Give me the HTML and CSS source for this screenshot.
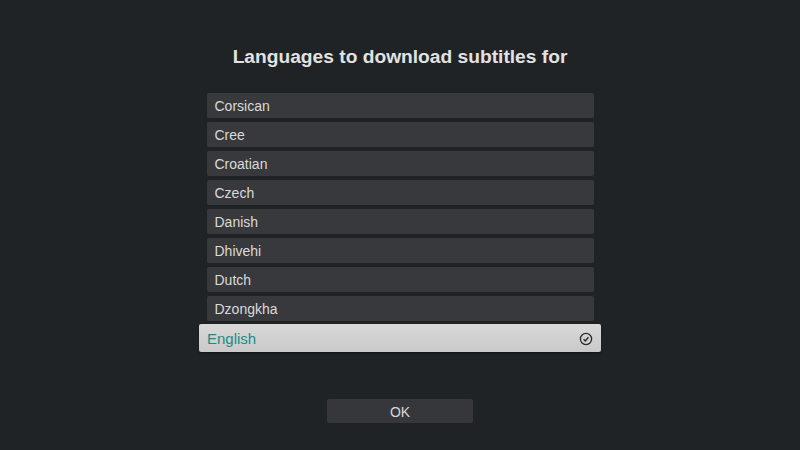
FILE: index.html
```html
<!DOCTYPE html>
<html>
<head>
<meta charset="utf-8">
<link rel="stylesheet" href="styles.css">
</head>
<body>
<div class="dialog">
  <h1 class="title">Languages to download subtitles for</h1>
  <ul class="list">
    <li class="item">Corsican</li>
    <li class="item">Cree</li>
    <li class="item">Croatian</li>
    <li class="item">Czech</li>
    <li class="item">Danish</li>
    <li class="item">Dhivehi</li>
    <li class="item">Dutch</li>
    <li class="item">Dzongkha</li>
    <li class="item focused"><span>English</span>
      <svg class="check" width="14" height="14" viewBox="0 0 14 14"><circle cx="7" cy="7" r="5.6" fill="none" stroke="#2a2a2a" stroke-width="1.3"/><path d="M4.6 7.2 L6.3 8.9 L9.4 5.3" fill="none" stroke="#2a2a2a" stroke-width="1.4"/></svg>
    </li>
  </ul>
  <div class="actions"><button class="ok">OK</button></div>
</div>
</body>
</html>
```
FILE: styles.css
```css
html, body {
  margin: 0;
  padding: 0;
  width: 800px;
  height: 450px;
  background: #202326;
  overflow: hidden;
  font-family: "Liberation Sans", Arial, sans-serif;
}
.dialog {
  display: flex;
  flex-direction: column;
  align-items: center;
}
.title {
  margin: 44px 0 0;
  height: 26px;
  font-size: 19.2px;
  line-height: 26px;
  font-weight: bold;
  color: #e2e2e2;
}
.list {
  list-style: none;
  margin: 23px 0 0;
  padding: 0;
  width: 402px;
  display: flex;
  flex-direction: column;
  align-items: center;
  gap: 4px;
}
.item {
  box-sizing: border-box;
  width: 387px;
  height: 25px;
  padding: 1px 0 0 8px;
  background: #38393c;
  border-radius: 2px;
  color: #dadada;
  font-size: 14px;
  line-height: 24px;
}
.item.focused {
  width: 402px;
  height: 28px;
  margin-top: -1px;
  padding: 2px 8px 0 8px;
  line-height: 26px;
  background: linear-gradient(180deg, #d9d9d9, #c9c9c9);
  color: #1a8c88;
  font-size: 15px;
  display: flex;
  justify-content: space-between;
  align-items: center;
  box-shadow: 0 1px 2px rgba(0,0,0,0.5);
}
.check { display: block; }
.actions {
  margin-top: 47px;
}
.ok {
  width: 146px;
  height: 24px;
  border: none;
  border-radius: 2px;
  background: #36373a;
  color: #d8d8d8;
  font-family: "Liberation Sans", Arial, sans-serif;
  font-size: 14px;
  padding: 2px 0 0;
}
```
